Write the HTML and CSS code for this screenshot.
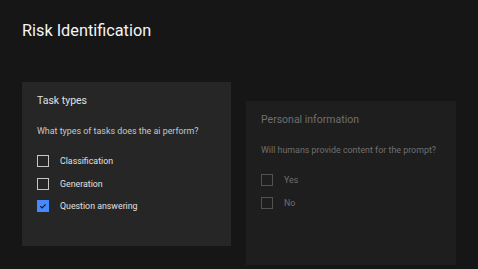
FILE: index.html
```html
<!DOCTYPE html>
<html lang="en">
<head>
    <meta charset="UTF-8">
    <meta name="viewport" content="width=device-width, initial-scale=1.0">
    <title>Risk Identification</title>
    <link rel="stylesheet" href="styles.css">
</head>
<body>
    <h1 class="page-title">Risk Identification</h1>
    <div class="cards">
        <div class="card">
            <h2 class="card-title">Task types</h2>
            <p class="question">What types of tasks does the ai perform?</p>
            <div class="options">
                <label class="option"><span class="box"></span>Classification</label>
                <label class="option"><span class="box"></span>Generation</label>
                <label class="option"><span class="box checked">
                    <svg viewBox="0 0 12 12" width="12" height="12"><path d="M3.3 6.2 L5.1 7.9 L8.6 4.3" fill="none" stroke="#161616" stroke-width="1.1"/></svg>
                </span>Question answering</label>
            </div>
        </div>
        <div class="card disabled">
            <h2 class="card-title">Personal information</h2>
            <p class="question">Will humans provide content for the prompt?</p>
            <div class="options">
                <label class="option"><span class="box"></span>Yes</label>
                <label class="option"><span class="box"></span>No</label>
            </div>
        </div>
    </div>
</body>
</html>
```
FILE: styles.css
```css
body {
    margin: 0;
    padding: 19px 22px 0 22px;
    background-color: #161616;
    font-family: Roboto, "Noto Sans", sans-serif;
    color: #f4f4f4;
}
.page-title {
    font-size: 16.3px;
    font-weight: 400;
    margin: 0;
    line-height: 24px;
}
.cards {
    display: flex;
    align-items: flex-start;
    gap: 15px;
    margin-top: 39px;
}
.card {
    width: 209px;
    height: 164px;
    box-sizing: border-box;
    padding: 11px 15px;
    background-color: #262626;
}
.card.disabled {
    width: 210px;
    margin-top: 19px;
    background-color: #1e1e1e;
}
.card-title {
    font-size: 10.5px;
    font-weight: 400;
    line-height: 16px;
    margin: 0;
    color: #e0e0e0;
}
.question {
    font-size: 8.9px;
    line-height: 14px;
    margin: 15px 0 0 0;
    color: #c6c6c6;
    white-space: nowrap;
}
.options {
    margin-top: 17px;
    display: flex;
    flex-direction: column;
    gap: 10.5px;
}
.option {
    display: flex;
    align-items: center;
    font-size: 8.8px;
    line-height: 12px;
    color: #e0e0e0;
}
.box {
    width: 12px;
    height: 12px;
    box-sizing: border-box;
    border: 1px solid #c6c6c6;
    margin-right: 11px;
    display: inline-flex;
}
.box.checked {
    border: none;
    background-color: #4589ff;
}
.disabled .card-title,
.disabled .question,
.disabled .option {
    color: #6f6f6f;
}
.disabled .box {
    border-color: #525252;
}
```
